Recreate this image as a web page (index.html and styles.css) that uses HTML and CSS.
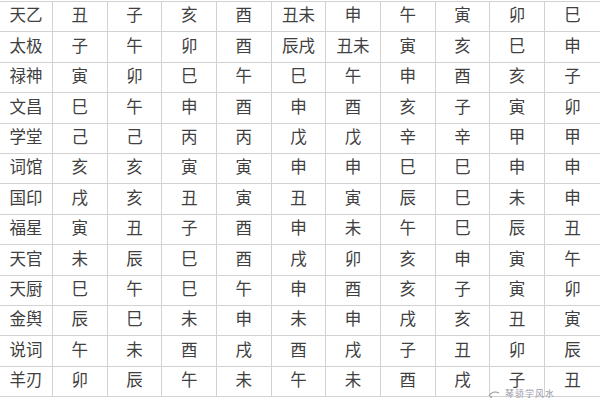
FILE: index.html
```html
<!DOCTYPE html>
<html lang="zh">
<head>
<meta charset="utf-8">
<link rel="stylesheet" href="styles.css">
</head>
<body>
<div class="page">
  <div class="grid">
    <div class="c name">天乙</div><div class="c">丑</div><div class="c">子</div><div class="c">亥</div><div class="c">酉</div><div class="c">丑未</div><div class="c">申</div><div class="c">午</div><div class="c">寅</div><div class="c">卯</div><div class="c">巳</div>
    <div class="c name">太极</div><div class="c">子</div><div class="c">午</div><div class="c">卯</div><div class="c">酉</div><div class="c">辰戌</div><div class="c">丑未</div><div class="c">寅</div><div class="c">亥</div><div class="c">巳</div><div class="c">申</div>
    <div class="c name">禄神</div><div class="c">寅</div><div class="c">卯</div><div class="c">巳</div><div class="c">午</div><div class="c">巳</div><div class="c">午</div><div class="c">申</div><div class="c">酉</div><div class="c">亥</div><div class="c">子</div>
    <div class="c name">文昌</div><div class="c">巳</div><div class="c">午</div><div class="c">申</div><div class="c">酉</div><div class="c">申</div><div class="c">酉</div><div class="c">亥</div><div class="c">子</div><div class="c">寅</div><div class="c">卯</div>
    <div class="c name">学堂</div><div class="c">己</div><div class="c">己</div><div class="c">丙</div><div class="c">丙</div><div class="c">戊</div><div class="c">戊</div><div class="c">辛</div><div class="c">辛</div><div class="c">甲</div><div class="c">甲</div>
    <div class="c name">词馆</div><div class="c">亥</div><div class="c">亥</div><div class="c">寅</div><div class="c">寅</div><div class="c">申</div><div class="c">申</div><div class="c">巳</div><div class="c">巳</div><div class="c">申</div><div class="c">申</div>
    <div class="c name">国印</div><div class="c">戌</div><div class="c">亥</div><div class="c">丑</div><div class="c">寅</div><div class="c">丑</div><div class="c">寅</div><div class="c">辰</div><div class="c">巳</div><div class="c">未</div><div class="c">申</div>
    <div class="c name">福星</div><div class="c">寅</div><div class="c">丑</div><div class="c">子</div><div class="c">酉</div><div class="c">申</div><div class="c">未</div><div class="c">午</div><div class="c">巳</div><div class="c">辰</div><div class="c">丑</div>
    <div class="c name">天官</div><div class="c">未</div><div class="c">辰</div><div class="c">巳</div><div class="c">酉</div><div class="c">戌</div><div class="c">卯</div><div class="c">亥</div><div class="c">申</div><div class="c">寅</div><div class="c">午</div>
    <div class="c name">天厨</div><div class="c">巳</div><div class="c">午</div><div class="c">巳</div><div class="c">午</div><div class="c">申</div><div class="c">酉</div><div class="c">亥</div><div class="c">子</div><div class="c">寅</div><div class="c">卯</div>
    <div class="c name">金舆</div><div class="c">辰</div><div class="c">巳</div><div class="c">未</div><div class="c">申</div><div class="c">未</div><div class="c">申</div><div class="c">戌</div><div class="c">亥</div><div class="c">丑</div><div class="c">寅</div>
    <div class="c name">说词</div><div class="c">午</div><div class="c">未</div><div class="c">酉</div><div class="c">戌</div><div class="c">酉</div><div class="c">戌</div><div class="c">子</div><div class="c">丑</div><div class="c">卯</div><div class="c">辰</div>
    <div class="c name">羊刃</div><div class="c">卯</div><div class="c">辰</div><div class="c">午</div><div class="c">未</div><div class="c">午</div><div class="c">未</div><div class="c">酉</div><div class="c">戌</div><div class="c">子</div><div class="c">丑</div>
  </div>
  <div class="mark">
    <svg class="mark-icon" width="12" height="9" viewBox="0 0 12 9"><path d="M1 7 C3 3 7 2 11 4" fill="none" stroke="#9a9a9a" stroke-width="1.2"/><circle cx="3" cy="8" r="1" fill="#9a9a9a"/></svg>
    <span class="mark-text">琴骄学风水</span>
  </div>
</div>
</body>
</html>
```

FILE: styles.css
```css
html, body {
  margin: 0;
  padding: 0;
  background: #ffffff;
}

.page {
  position: relative;
  width: 600px;
  height: 400px;
  overflow: hidden;
  background: #ffffff;
}

.grid {
  display: grid;
  grid-template-columns: 52px repeat(9, 53.67px) 1fr;
  grid-auto-rows: 29.4px;
  gap: 1px;
  background: #d2d2d2;
  margin-top: 1px;
  padding: 1px 0;
}

.c {
  background: #ffffff;
  display: flex;
  align-items: center;
  justify-content: center;
  padding-bottom: 4px;
  box-sizing: border-box;
  font-family: "Noto Sans CJK SC", "Noto Sans", sans-serif;
  font-size: 16.5px;
  color: #404040;
  line-height: 1;
}

.mark {
  position: absolute;
  left: 488px;
  top: 389px;
  display: flex;
  align-items: center;
  gap: 5px;
}

.mark-text {
  font-family: "Noto Sans CJK SC", sans-serif;
  font-size: 9px;
  color: #9a9aa8;
  line-height: 1;
  letter-spacing: 1px;
}
```
